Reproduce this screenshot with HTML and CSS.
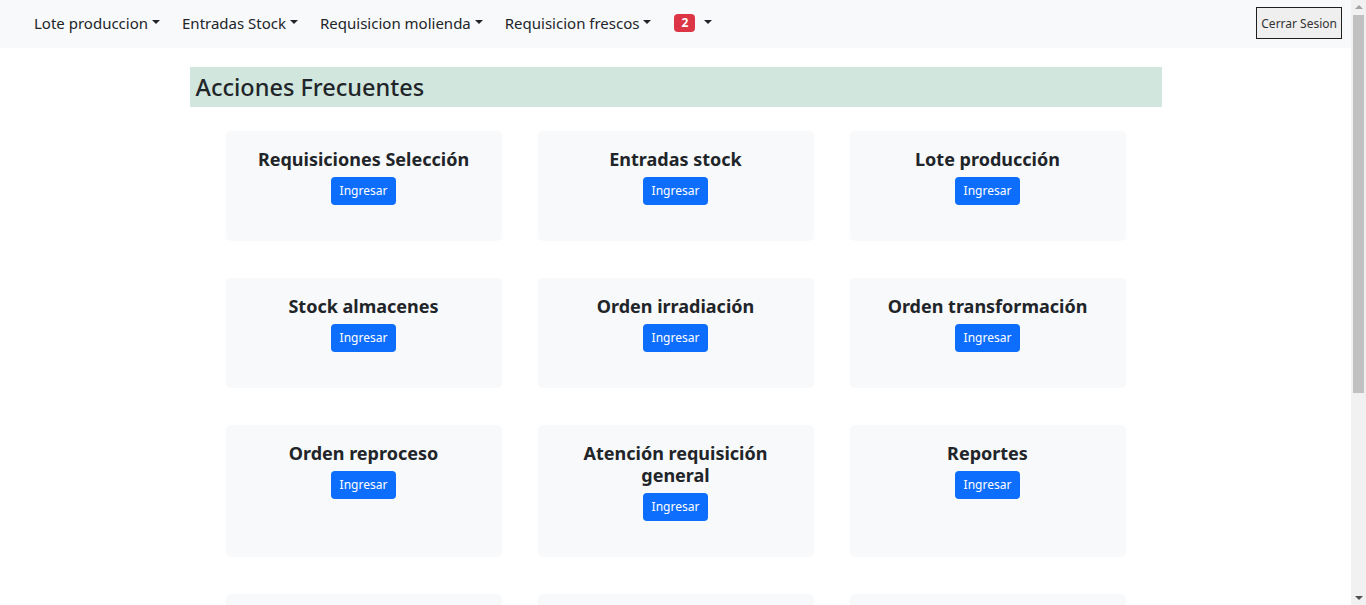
FILE: index.html
```html
<!DOCTYPE html>
<html lang="es">
<head>
<meta charset="utf-8">
<title>Acciones Frecuentes</title>
<link rel="stylesheet" href="styles.css">
</head>
<body>
<div class="page">
  <nav class="navbar">
    <ul class="nav-list">
      <li><a class="nav-link dropdown" href="#">Lote produccion</a></li>
      <li><a class="nav-link dropdown" href="#">Entradas Stock</a></li>
      <li><a class="nav-link dropdown" href="#">Requisicion molienda</a></li>
      <li><a class="nav-link dropdown" href="#">Requisicion frescos</a></li>
      <li><a class="nav-link dropdown badge-link" href="#"><span class="badge">2</span></a></li>
    </ul>
    <button class="logout">Cerrar Sesion</button>
  </nav>
  <main class="main">
    <h2 class="section-title">Acciones Frecuentes</h2>
    <div class="grid">
      <div class="card"><h4 class="card-title">Requisiciones Selección</h4><a class="btn" href="#">Ingresar</a></div>
      <div class="card"><h4 class="card-title">Entradas stock</h4><a class="btn" href="#">Ingresar</a></div>
      <div class="card"><h4 class="card-title">Lote producción</h4><a class="btn" href="#">Ingresar</a></div>
      <div class="card"><h4 class="card-title">Stock almacenes</h4><a class="btn" href="#">Ingresar</a></div>
      <div class="card"><h4 class="card-title">Orden irradiación</h4><a class="btn" href="#">Ingresar</a></div>
      <div class="card"><h4 class="card-title">Orden transformación</h4><a class="btn" href="#">Ingresar</a></div>
      <div class="card"><h4 class="card-title">Orden reproceso</h4><a class="btn" href="#">Ingresar</a></div>
      <div class="card"><h4 class="card-title narrow">Atención requisición general</h4><a class="btn" href="#">Ingresar</a></div>
      <div class="card"><h4 class="card-title">Reportes</h4><a class="btn" href="#">Ingresar</a></div>
      <div class="card card-empty"></div>
      <div class="card card-empty"></div>
      <div class="card card-empty"></div>
    </div>
  </main>
</div>
<div class="scrollbar">
  <span class="arrow arrow-up"></span>
  <div class="track"><div class="thumb"></div></div>
  <span class="arrow arrow-down"></span>
</div>
</body>
</html>
```

FILE: styles.css
```css
* { box-sizing: border-box; }
html, body { margin: 0; padding: 0; }
body {
  font-family: "Noto Sans", "Open Sans", sans-serif;
  color: #212529;
  background: #fff;
  font-size: 16px;
  display: flex;
  height: 100vh;
  overflow: hidden;
}
.page {
  flex: 1;
  min-width: 0;
  overflow: hidden;
}
.scrollbar {
  width: 15px;
  flex: none;
  background: #f1f1f1;
  display: flex;
  flex-direction: column;
  align-items: center;
}
.arrow {
  flex: none;
  width: 0;
  height: 0;
  border-left: 4px solid transparent;
  border-right: 4px solid transparent;
  margin: 5px 0;
}
.arrow-up { border-bottom: 4px solid #a3a3a3; }
.arrow-down { border-top: 4px solid #505050; }
.track {
  flex: 1;
  width: 100%;
  padding: 0 2px;
}
.thumb {
  background: #c1c1c1;
  height: 378px;
  margin-top: 1px;
}
.navbar {
  background: #f8f9fa;
  height: 48px;
  display: flex;
  align-items: center;
  justify-content: space-between;
  padding: 0 9px 2px 26px;
}
.nav-list {
  list-style: none;
  margin: 0;
  padding: 0;
  display: flex;
  align-items: center;
}
.nav-link {
  display: flex;
  align-items: center;
  padding: 8px 14px 8px 8px;
  color: #212529;
  text-decoration: none;
  font-size: 15px;
  line-height: 22px;
}
.dropdown::after {
  content: "";
  display: inline-block;
  margin-left: 4px;
  border-top: 4.5px solid #212529;
  border-left: 4px solid transparent;
  border-right: 4px solid transparent;
  margin-top: -2px;
}
.badge-link { padding-left: 9px; }
.badge-link::after { margin-left: 9px; }
.badge {
  display: inline-block;
  background: #dc3545;
  color: #fff;
  font-size: 12px;
  font-weight: 700;
  line-height: 18px;
  padding: 0 7px;
  border-radius: 4px;
}
.logout {
  font-family: "Noto Sans", sans-serif;
  font-size: 12px;
  background: #efefef;
  border: 1px solid #1f1f1f;
  color: #333;
  height: 32px;
  padding: 0 4px;
  border-radius: 0;
}
.main {
  width: 972px;
  margin: 19px auto 0;
}
.section-title {
  background: #d1e7dd;
  margin: 0;
  font-size: 23.5px;
  font-weight: 500;
  line-height: 40px;
  padding: 0 6px;
}
.grid {
  display: grid;
  grid-template-columns: repeat(3, 276px);
  column-gap: 36px;
  row-gap: 37px;
  padding: 24px 36px 0;
}
.card {
  background: #f8f9fa;
  border-radius: 5px;
  padding: 17px 16px 36px;
  display: flex;
  flex-direction: column;
  align-items: center;
  text-align: center;
}
.card-empty { min-height: 110px; }
.card-title {
  margin: 0 0 7px;
  font-size: 18px;
  font-weight: 700;
  line-height: 22px;
}
.card-title.narrow { max-width: 200px; }
.btn {
  display: inline-block;
  background: #0d6efd;
  color: #fff;
  text-decoration: none;
  font-size: 12px;
  line-height: 18px;
  padding: 5px 9px;
  border-radius: 4px;
}
```
